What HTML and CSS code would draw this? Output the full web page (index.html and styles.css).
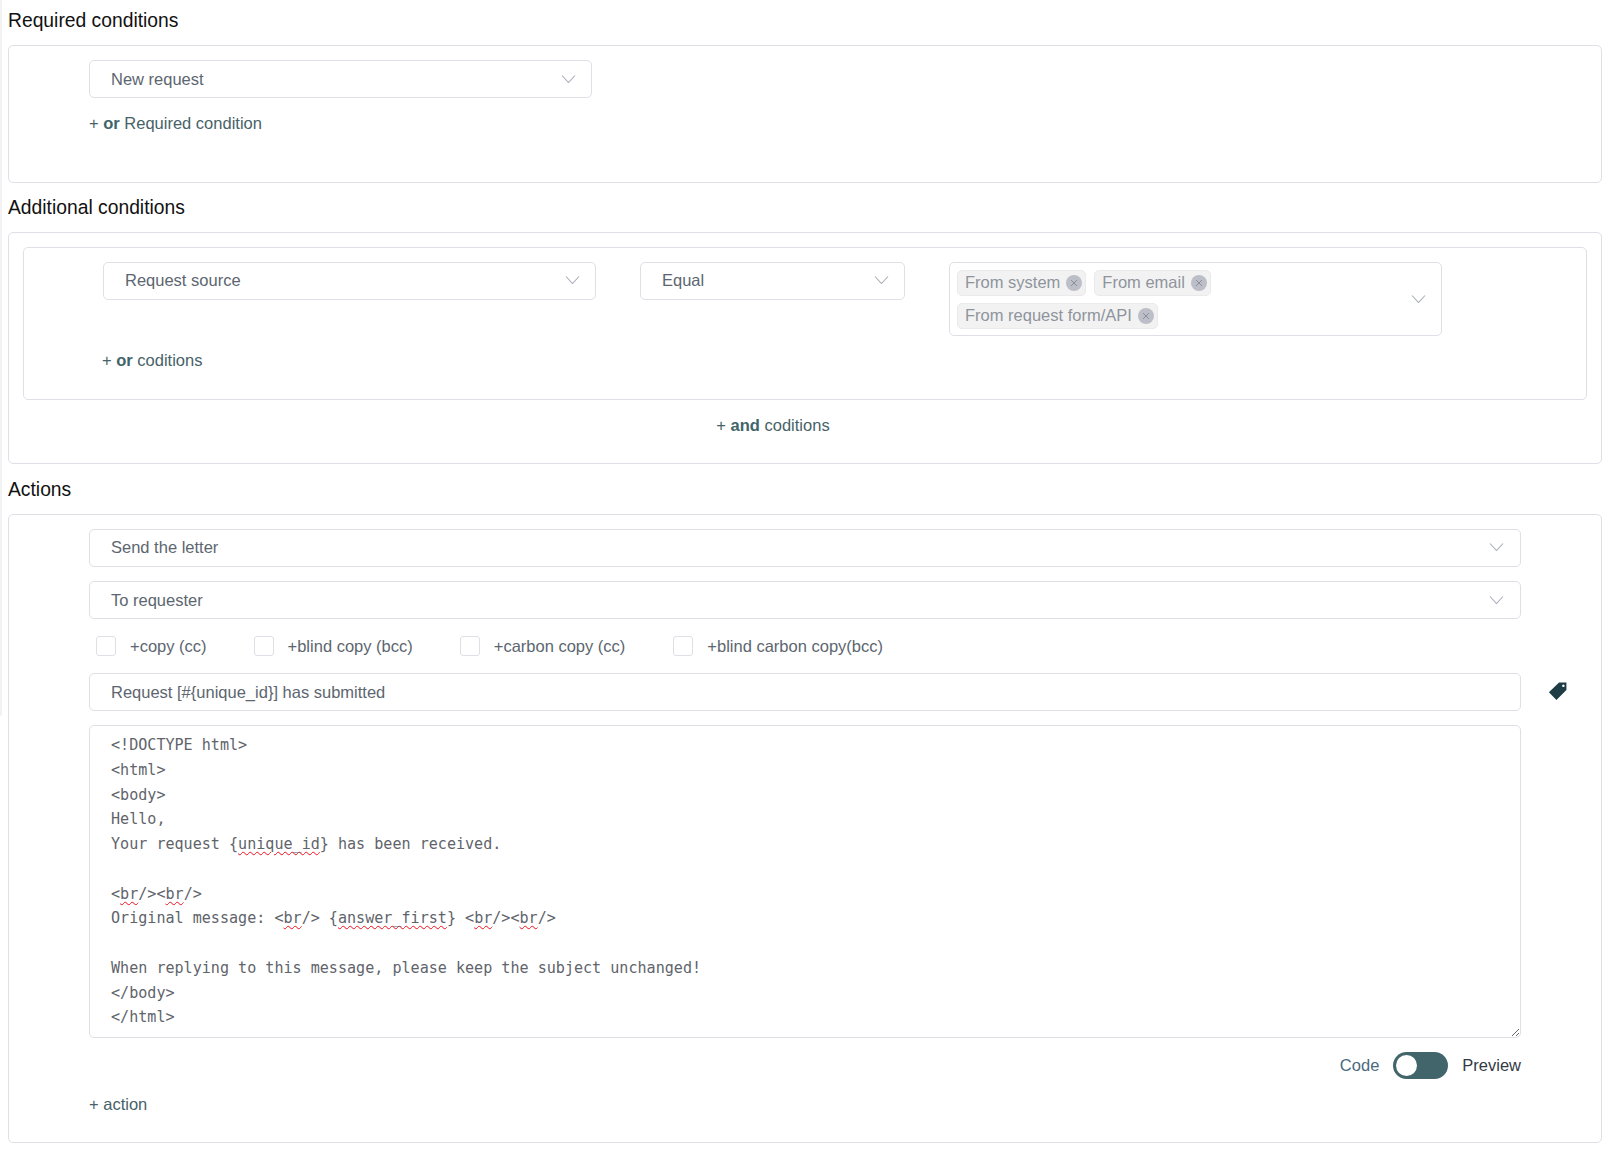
FILE: index.html
```html
<!DOCTYPE html>
<html lang="en">
<head>
<meta charset="utf-8">
<title>Rule</title>
<link rel="stylesheet" href="styles.css">
</head>
<body>
<h2 class="heading">Required conditions</h2>
<section class="panel panel-required">
  <div class="select select-req"><span>New request</span><svg class="chev" viewBox="0 0 14 8"><path d="M.5.5 7 7.5 13.500.5"/></svg></div>
  <p class="add add-req">+ <b>or</b> Required condition</p>
</section>
<h2 class="heading">Additional conditions</h2>
<section class="panel panel-additional">
  <div class="inner">
    <div class="cond-row">
      <div class="select select-source"><span>Request source</span><svg class="chev" viewBox="0 0 14 8"><path d="M.5.5 7 7.5 13.500.5"/></svg></div>
      <div class="select select-equal"><span>Equal</span><svg class="chev" viewBox="0 0 14 8"><path d="M.5.5 7 7.5 13.500.5"/></svg></div>
      <div class="select select-tags">
        <div class="tags">
          <span class="tag">From system <i class="x"><svg viewBox="0 0 16 16"><path d="M5 5l6 6M11 5l-6 6"/></svg></i></span>
          <span class="tag">From email <i class="x"><svg viewBox="0 0 16 16"><path d="M5 5l6 6M11 5l-6 6"/></svg></i></span>
          <span class="tag">From request form/API <i class="x"><svg viewBox="0 0 16 16"><path d="M5 5l6 6M11 5l-6 6"/></svg></i></span>
        </div>
        <svg class="chev" viewBox="0 0 14 8"><path d="M.5.5 7 7.5 13.500.5"/></svg>
      </div>
    </div>
    <p class="add add-or">+ <b>or</b> coditions</p>
  </div>
  <p class="add add-and">+ <b>and</b> coditions</p>
</section>
<h2 class="heading">Actions</h2>
<section class="panel panel-actions">
  <div class="action-col">
    <div class="select select-send"><span>Send the letter</span><svg class="chev" viewBox="0 0 14 8"><path d="M.5.5 7 7.5 13.500.5"/></svg></div>
    <div class="select"><span>To requester</span><svg class="chev" viewBox="0 0 14 8"><path d="M.5.5 7 7.5 13.500.5"/></svg></div>
    <div class="checks">
      <label class="check check-1"><i class="box"></i>+copy (cc)</label>
      <label class="check check-2"><i class="box"></i>+blind copy (bcc)</label>
      <label class="check check-3"><i class="box"></i>+carbon copy (cc)</label>
      <label class="check"><i class="box"></i>+blind carbon copy(bcc)</label>
    </div>
    <div class="subject-wrap">
      <div class="select subject"><span>Request [#{unique_id}] has submitted</span></div>
      <svg class="tag-icon" viewBox="0 0 20 20"><path fill-rule="evenodd" d="M11.500 1.500H18.500V8.500L9 18 1.800 10.800ZM15.600 3.400a1.200 1.200 0 1 0 .01 0Z"/></svg>
    </div>
    <div class="code">&lt;!DOCTYPE html&gt;
&lt;html&gt;
&lt;body&gt;
Hello,
Your request {<u>unique_id</u>} has been received.

&lt;<u>br</u>/&gt;&lt;<u>br</u>/&gt;
Original message: &lt;<u>br</u>/&gt; {<u>answer_first</u>} &lt;<u>br</u>/&gt;&lt;<u>br</u>/&gt;

When replying to this message, please keep the subject unchanged!
&lt;/body&gt;
&lt;/html&gt;</div>
    <div class="mode">
      <span class="mode-code">Code</span>
      <span class="switch"><i class="knob"></i></span>
      <span class="mode-preview">Preview</span>
    </div>
    <p class="add add-action">+ action</p>
  </div>
</section>
</body>
</html>
```
FILE: styles.css
```css
* { box-sizing: border-box; }
html, body { background: #fff; }
body {
  margin: 0;
  padding: 8px 14px 0 8px;
  font-family: "Liberation Sans", Arial, sans-serif;
  font-size: 16.5px;
  color: #5c6670;
  position: relative;
}
body::before {
  content: "";
  position: absolute;
  left: 0; top: 0;
  width: 2px; height: 716px;
  background: #f2f2f4;
  border-radius: 0 0 2px 0;
}
.heading {
  margin: 0;
  font-size: 19.3px;
  line-height: 25px;
  font-weight: 400;
  color: #111;
  height: 37px;
}
.panel {
  border: 1px solid #dfe0e6;
  border-radius: 5px;
  background: #fff;
}
.panel-required { height: 138px; padding: 14px 0 0 80px; margin-bottom: 12px; }
.panel-additional { height: 232px; padding: 14px 14px 0; margin-bottom: 13px; }
.panel-actions { height: 629px; padding: 14px 0 0 80px; }
.select {
  display: flex;
  align-items: center;
  justify-content: space-between;
  height: 38px;
  padding: 0 15px 0 21px;
  border: 1px solid #dfe0e6;
  border-radius: 5px;
  background: #fff;
  color: #5c6670;
}
.select-req { width: 503px; }
.chev { width: 15px; height: 8px; fill: none; stroke: #a9adb8; stroke-width: 1.1; flex: none; }
.add { margin: 0; color: #476268; }
.add b { font-weight: 700; color: #3f646a; }
.add-req { margin-top: 16px; }
.inner { height: 153px; border: 1px solid #dfe0e6; border-radius: 5px; padding: 14px 0 0 79px; }
.cond-row { display: flex; align-items: flex-start; }
.select-source { width: 493px; padding-bottom: 2px; }
.select-equal { width: 265px; margin-left: 44px; padding-bottom: 2px; }
.select-tags { width: 493px; height: 74px; margin-left: 44px; padding: 0 15px 0 7px; }
.tags { display: flex; flex-wrap: wrap; gap: 7px 8px; width: 320px; }
.tag {
  display: inline-flex;
  align-items: center;
  gap: 6px;
  height: 26px;
  padding: 0 3px 0 7px;
  background: #f2f2f3;
  border: 1px solid #eaeaec;
  border-radius: 5px;
  color: #8f949c;
  white-space: nowrap;
}
.x { display: block; width: 16px; height: 16px; border-radius: 50%; background: #bcbfc7; }
.x svg { display: block; width: 16px; height: 16px; fill: none; stroke: #8b8e97; stroke-width: 1; }
.add-or { margin: 15px 0 0 -1px; }
.add-and { text-align: center; margin-top: 16px; padding-right: 64px; }
.action-col { width: 1432px; }
.action-col > .select { margin-bottom: 14px; padding-right: 16px; }
.action-col > .select-send { padding-bottom: 2px; }
.checks { display: flex; align-items: center; height: 26px; padding-left: 7px; margin: 0 0 14px; }
.check { display: flex; align-items: center; color: #5c6670; }
.check-1 { margin-right: 47px; }
.check-2 { margin-right: 47px; }
.check-3 { margin-right: 48px; }
.box { display: block; width: 20px; height: 20px; margin-right: 14px; border: 1px solid #dfe0e6; border-radius: 3px; background: #fff; }
.subject-wrap { position: relative; margin-bottom: 14px; }
.subject { padding-right: 22px; }
.tag-icon { position: absolute; left: 1458px; top: 8px; width: 21px; height: 21px; fill: #1f3d44; }
.code {
  height: 313px;
  padding: 7px 21px 0;
  border: 1px solid #dfe0e6;
  border-radius: 5px;
  font-family: "DejaVu Sans Mono", monospace;
  font-size: 15.08px;
  line-height: 24.75px;
  white-space: pre;
  color: #5f646b;
  overflow: auto;
  resize: vertical;
}
.code u { text-decoration: underline wavy #f0101c 1.2px; text-underline-offset: 2px; }
.mode { display: flex; align-items: center; justify-content: flex-end; height: 27px; margin-top: 14px; }
.mode-code { color: #4a6a80; }
.mode-preview { color: #333a44; }
.switch { display: block; width: 55px; height: 27px; margin: 0 14px; border-radius: 14px; background: #41656a; padding: 3px 0 0 3px; }
.knob { display: block; width: 21px; height: 21px; border-radius: 50%; background: #fff; }
.add-action { margin-top: 16px; color: #476268; }
```
